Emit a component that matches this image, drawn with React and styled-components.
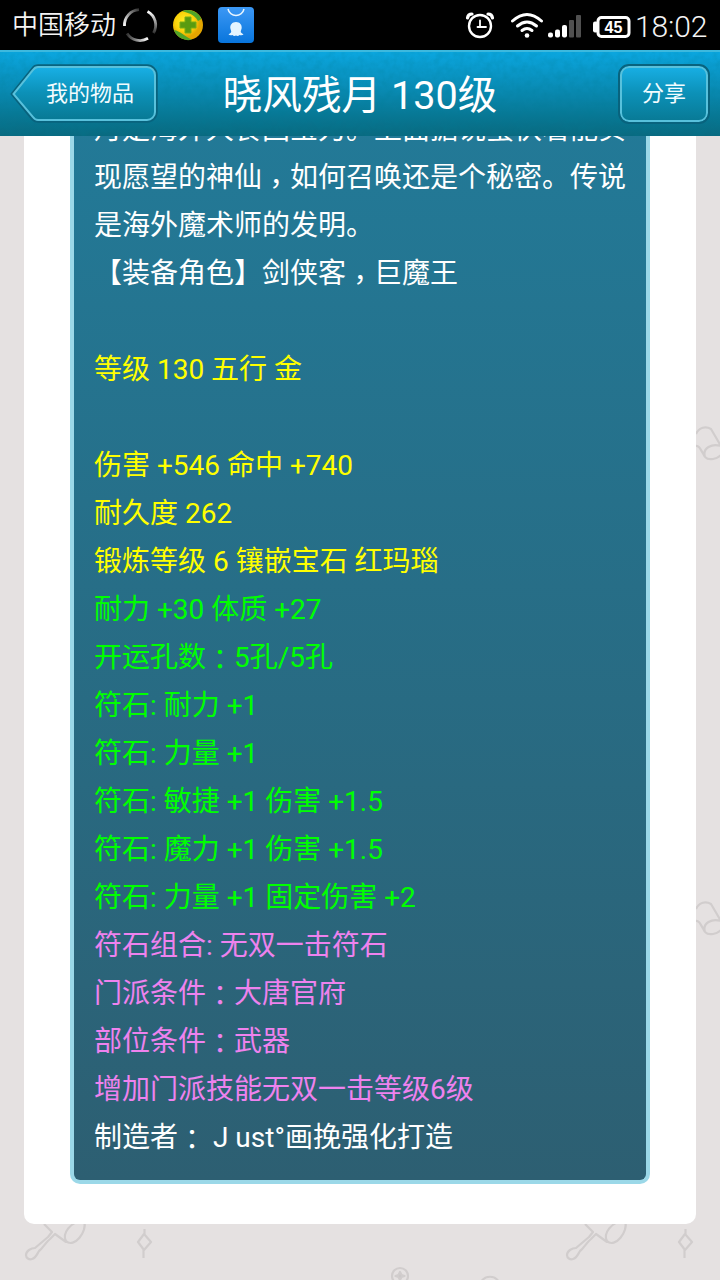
import styled, { createGlobalStyle } from "styled-components";

const GlobalStyle = createGlobalStyle`
  * {
    box-sizing: border-box;
  }

  body {
    margin: 0;
    background: #e5e1e1;
    font-family: Roboto, "Noto Sans CJK SC", sans-serif;
  }
`;

const Screen = styled.div`
  position: relative;
  display: flex;
  flex-flow: column nowrap;
  width: 720px;
  height: 1280px;
  overflow: hidden;
  background: #e5e1e1;
`;

const DoodleLayer = styled.svg`
  position: absolute;
  inset: 0;
  fill: none;
  stroke: #d1cdcd;
  stroke-width: 2.2;
  stroke-linejoin: round;
`;

//Status bar
const StatusBar = styled.div`
  position: relative;
  display: flex;
  flex: none;
  align-items: center;
  height: 50px;
  padding: 0 9px 0 12px;
  background: #000;
  color: #f4f4f4;
`;

const Carrier = styled.span`
  width: 110px;
  font-size: 26px;
  font-weight: 350;
  line-height: 50px;
  white-space: nowrap;
`;

const StatusGroup = styled.div`
  display: flex;
  align-items: center;
  margin-left: auto;
`;

const StatusIcon = styled.svg`
  display: block;
  flex: none;
  margin-left: ${({ $gap = 0 }) => $gap}px;
`;

const BatteryText = styled.text`
  font: 700 16px "Liberation Sans", sans-serif;
  fill: #fff;
`;

const Clock = styled.span`
  width: 76px;
  margin-left: 2px;
  font-size: 30px;
  font-weight: 300;
  line-height: 50px;
  padding-top: 3px;
  letter-spacing: -0.1px;
`;

//Title bar
const TitleBar = styled.header`
  position: relative;
  display: grid;
  flex: none;
  grid-template-columns: 160px 1fr 160px;
  align-items: center;
  height: 86px;
  border-top: 2px solid #3db9de;
  background: linear-gradient(#0ba6df, #087895 75%, #096a80);
`;

const Grain = styled.svg`
  position: absolute;
  inset: 0;
  width: 100%;
  height: 100%;
  opacity: 0.16;
`;

const Title = styled.h1`
  margin: 0;
  padding-top: 4px;
  color: #fff;
  font-size: 39.6px;
  font-weight: 400;
  line-height: 80px;
  text-align: center;
  white-space: nowrap;
  position: relative;
`;

const BackButton = styled.button`
  position: relative;
  width: 148px;
  height: 60px;
  margin-left: 10px;
  padding: 0 0 1px 12px;
  border: 0;
  background: none;
  color: #f2fcff;
  font: 400 22px/56px Roboto, "Noto Sans CJK SC", sans-serif;
`;

const BackShape = styled.svg`
  position: absolute;
  inset: 0;
`;

const BackLabel = styled.span`
  position: relative;
`;

const ShareButton = styled.button`
  position: relative;
  justify-self: end;
  width: 92px;
  height: 60px;
  margin-right: 10px;
  padding: 0 0 1px;
  border: 2px solid #08637e;
  border-radius: 11px;
  box-shadow: inset 0 0 0 2px #58c1dc;
  background: linear-gradient(#18b0e6, #0c91b8 48%, #087994);
  color: #f2fcff;
  font: 400 22px/52px Roboto, "Noto Sans CJK SC", sans-serif;
`;

//Item card
const Content = styled.main`
  position: relative;
  flex: none;
  height: 1088px;
  margin: 0 24px;
  padding: 0 46px 40px;
  overflow: hidden;
  border-radius: 0 0 10px 10px;
  background: #fff;
`;

const ItemPanel = styled.section`
  height: 1078px;
  margin-top: -30px;
  padding: 0 20px 18px;
  border: 4px solid #9bd8e8;
  border-top: 0;
  border-radius: 0 0 10px 10px;
  background: linear-gradient(#227a98, #2d5f72);
`;

const Line = styled.p`
  height: 48px;
  margin: 0;
  color: ${({ $color }) => $color};
  font-size: 28px;
  line-height: 48px;
  white-space: pre;
`;

const Mark = styled.span`
  font-family: "Noto Sans CJK TC", sans-serif;
  line-height: 1;
  vertical-align: ${({ $drop }) => $drop}px;
`;

const white = "#fff";
const yellow = "#ff0";
const green = "#0f0";
const violet = "#ee82ee";

const lines = [
  [white, "月是海外大食国宝刀。上面据说蛰伏着能实"],
  [white, "现愿望的神仙，如何召唤还是个秘密。传说"],
  [white, "是海外魔术师的发明。"],
  [white, "【装备角色】剑侠客，巨魔王"],
  [white, ""],
  [yellow, "等级 130 五行 金"],
  [white, ""],
  [yellow, "伤害 +546 命中 +740"],
  [yellow, "耐久度 262"],
  [yellow, "锻炼等级 6 镶嵌宝石 红玛瑙"],
  [green, "耐力 +30 体质 +27"],
  [green, "开运孔数：5孔/5孔"],
  [green, "符石: 耐力 +1"],
  [green, "符石: 力量 +1"],
  [green, "符石: 敏捷 +1 伤害 +1.5"],
  [green, "符石: 魔力 +1 伤害 +1.5"],
  [green, "符石: 力量 +1 固定伤害 +2"],
  [violet, "符石组合: 无双一击符石"],
  [violet, "门派条件：大唐官府"],
  [violet, "部位条件：武器"],
  [violet, "增加门派技能无双一击等级6级"],
  [white, "制造者： J ust°画挽强化打造"],
];

// full-width commas and colons sit in the middle of their cell
const renderText = (text) =>
  text.split(/([，：])/).map((part, i) =>
    part === "，" || part === "：" ? (
      <Mark key={i} $drop={part === "，" ? -7 : -3}>
        {part}
      </Mark>
    ) : (
      part
    )
  );

const Doodles = () => (
  <DoodleLayer width="720" height="1280">
    {[0, 541].map((x) => (
      <g key={x} transform={`translate(${x} 0)`}>
        <path d="M44 1224l8 8-4 5-13 11c-4 0-9 3-9 7 0 3 3 5 6 4 4-1 5-5 7-8 4-3 6-8 11-12l5-5 11 8M66 1241c-4-7 4-20 18-20 4 10-10 28-18 20z" />
        <path d="M144 1234l-6 8 6 8 7-8zM144.500 1229v5M143.500 1250v8" />
      </g>
    ))}
    {[0, 475].map((y) => (
      <g key={y} transform={`translate(0 ${y})`}>
        <path d="M696 434c3-7 10-8 15-5l10 17M695 446c4-1 5 2 10 11M705 457c-3-9 7-14 16-11M705 457c4 4 12 2 16-2" />
      </g>
    ))}
    <circle cx="400" cy="1276" r="8" />
    <path d="M400 1272l1.5 3 3 1-3 1-1.5 3-1.5-3-3-1 3-1z" fill="#cbc7c7" />
    <path d="M481 1282c4-7 14-7 18 0" />
  </DoodleLayer>
);

const StatusIcons = () => (
  <>
    <StatusIcon width="38" height="38" viewBox="0 0 38 38">
      <defs>
        <linearGradient id="arcFadeDown" x1="0" y1="0" x2="0" y2="1">
          <stop offset="0" stopColor="#fff" />
          <stop offset="1" stopColor="#333" />
        </linearGradient>
        <linearGradient id="arcFadeLeft" x1="0" y1="0" x2="1" y2="0">
          <stop offset="0" stopColor="#333" />
          <stop offset="1" stopColor="#fff" />
        </linearGradient>
        <linearGradient id="arcFadeRight" x1="0" y1="1" x2="1" y2="0">
          <stop offset="0" stopColor="#fff" />
          <stop offset="1" stopColor="#333" />
        </linearGradient>
      </defs>
      <g fill="none" strokeWidth="2.800">
        <path d="M2.500 20A15.500 15.500 0 0 1 17 3.600" stroke="url(#arcFadeRight)" />
        <path d="M25.500 5.400A15.500 15.500 0 0 1 31.500 27" stroke="url(#arcFadeDown)" />
        <path d="M26 32.300A15.500 15.500 0 0 1 5 27.500" stroke="url(#arcFadeLeft)" />
      </g>
    </StatusIcon>
    <StatusIcon $gap={12} width="32" height="32" viewBox="0 0 32 32">
      <defs>
        <radialGradient id="ball" cx="0.4" cy="0.4">
          <stop offset="0" stopColor="#fff12a" />
          <stop offset="0.65" stopColor="#fbd20a" />
          <stop offset="1" stopColor="#e3a500" />
        </radialGradient>
      </defs>
      <circle cx="16" cy="16" r="15" fill="url(#ball)" />
      <path
        d="M10 2.300A15 15 0 0 1 29.500 10L26 12C22 5 16 4 10 2.300zM2 21c6 1 10 6 18 9.600A15 15 0 0 1 2 21z"
        fill="#4fa428"
      />
      <path
        d="M13 8h6v5h5v6h-5v5h-6v-5H8v-6h5z"
        fill="#5a9b10"
        stroke="#79ad15"
        strokeLinejoin="round"
      />
    </StatusIcon>
    <StatusIcon $gap={14} width="36" height="36" viewBox="0 0 36 36">
      <defs>
        <linearGradient id="storeBlue" x1="0" y1="0" x2="0" y2="1">
          <stop offset="0" stopColor="#3c98f5" />
          <stop offset="1" stopColor="#0875dc" />
        </linearGradient>
      </defs>
      <rect width="36" height="36" rx="4" fill="url(#storeBlue)" />
      <path
        d="M10 2a8.200 8.200 0 0 0 16 0"
        fill="none"
        stroke="#e8f5ff"
        strokeWidth="1.500"
      />
      <path
        d="M18 15c-4 0-6 3-5.700 6 .2 2 1.500 3 .7 4.500l-2.500 2c1 1 3 .8 4 .5 1 1.200 2.500 1 3.500.5 1 .5 2.500.7 3.500-.5 1 .3 3 .5 4-.5l-2.500-2c-.8-1.500.5-2.500.7-4.500.3-3-1.700-6-5.700-6z"
        fill="#e3f4ff"
      />
    </StatusIcon>
  </>
);

const SystemIcons = () => (
  <>
    <StatusIcon width="30" height="30" viewBox="0 0 30 30">
      <g fill="none" stroke="#fff" strokeLinecap="round">
        <circle cx="15" cy="16" r="11" strokeWidth="2.400" />
        <path d="M15 10.500V17h6M12.500 17H15" strokeWidth="1.800" />
        <path d="M2.500 8Q3 4 7 4M27.500 8Q27 4 23 4" strokeWidth="3.200" />
      </g>
    </StatusIcon>
    <StatusIcon $gap={15} width="34" height="30" viewBox="0 0 34 30">
      <g fill="none" stroke="#fff" strokeWidth="3" strokeLinecap="round">
        <path d="M2.500 11q14.500-13 29 0" />
        <path d="M7.500 16q9.500-8 19 0" />
        <path d="M12 20.500q5-4 10 0" />
      </g>
      <circle cx="17" cy="25.500" r="2.300" fill="#fff" />
    </StatusIcon>
    <StatusIcon $gap={4} width="34" height="30" viewBox="0 0 34 30">
      <rect x="0" y="22.500" width="5" height="5" rx="2" fill="#fff" />
      <rect x="7" y="19.500" width="5" height="8" rx="2" fill="#fff" />
      <rect x="14" y="15" width="5" height="12.500" rx="2" fill="#fff" />
      <rect x="21" y="10" width="5" height="17.500" rx="1" fill="#505050" />
      <rect x="28" y="5" width="5" height="22.500" rx="1" fill="#505050" />
    </StatusIcon>
    <StatusIcon $gap={11} width="40" height="30" viewBox="0 0 40 30">
      <rect
        x="5"
        y="7.500"
        width="31"
        height="19"
        rx="3.500"
        fill="none"
        stroke="#fff"
        strokeWidth="3"
      />
      <rect x="0" y="11.500" width="5" height="11" rx="2" fill="#fff" />
      <BatteryText x="20.500" y="22.500" textAnchor="middle">
        45
      </BatteryText>
    </StatusIcon>
  </>
);

const App = () => {
  return (
    <>
      <GlobalStyle />
      <Screen>
        <Doodles />
        <StatusBar>
          <Carrier>中国移动</Carrier>
          <StatusIcons />
          <StatusGroup>
            <SystemIcons />
            <Clock>18:02</Clock>
          </StatusGroup>
        </StatusBar>
        <TitleBar>
          <Grain>
            <filter id="grain">
              <feTurbulence
                type="fractalNoise"
                baseFrequency="0.14"
                numOctaves="3"
              />
              <feColorMatrix values="0 0 0 0 0  0 0 0 0 0.2  0 0 0 0 0.3  2.5 0 0 0 -0.9" />
            </filter>
            <rect width="100%" height="100%" filter="url(#grain)" />
          </Grain>
          <BackButton>
            <BackShape width="148" height="60" viewBox="0 0 148 60">
              <defs>
                <linearGradient id="backFill" x1="0" y1="0" x2="0" y2="1">
                  <stop offset="0" stopColor="#18b0e6" />
                  <stop offset="0.48" stopColor="#0c91b8" />
                  <stop offset="1" stopColor="#087994" />
                </linearGradient>
              </defs>
              <path
                d="M28 2H137a9 9 0 0 1 9 9V48a9 9 0 0 1-9 9H28q-3 0-5-2L2.500 30 23 4.500Q25 2 28 2z"
                fill="none"
                stroke="#08637e"
                strokeWidth="3.500"
              />
              <path
                d="M28 3H137a8 8 0 0 1 8 8V48a8 8 0 0 1-8 8H28q-3 0-5-3L3.500 30 23 6Q25 3 28 3z"
                fill="url(#backFill)"
                stroke="#58c1dc"
                strokeWidth="2"
              />
            </BackShape>
            <BackLabel>我的物品</BackLabel>
          </BackButton>
          <Title>晓风残月 130级</Title>
          <ShareButton>分享</ShareButton>
        </TitleBar>
        <Content>
          <ItemPanel>
            {lines.map(([color, text], i) => (
              <Line key={i} $color={color}>
                {renderText(text)}
              </Line>
            ))}
          </ItemPanel>
        </Content>
      </Screen>
    </>
  );
};

export default App;
